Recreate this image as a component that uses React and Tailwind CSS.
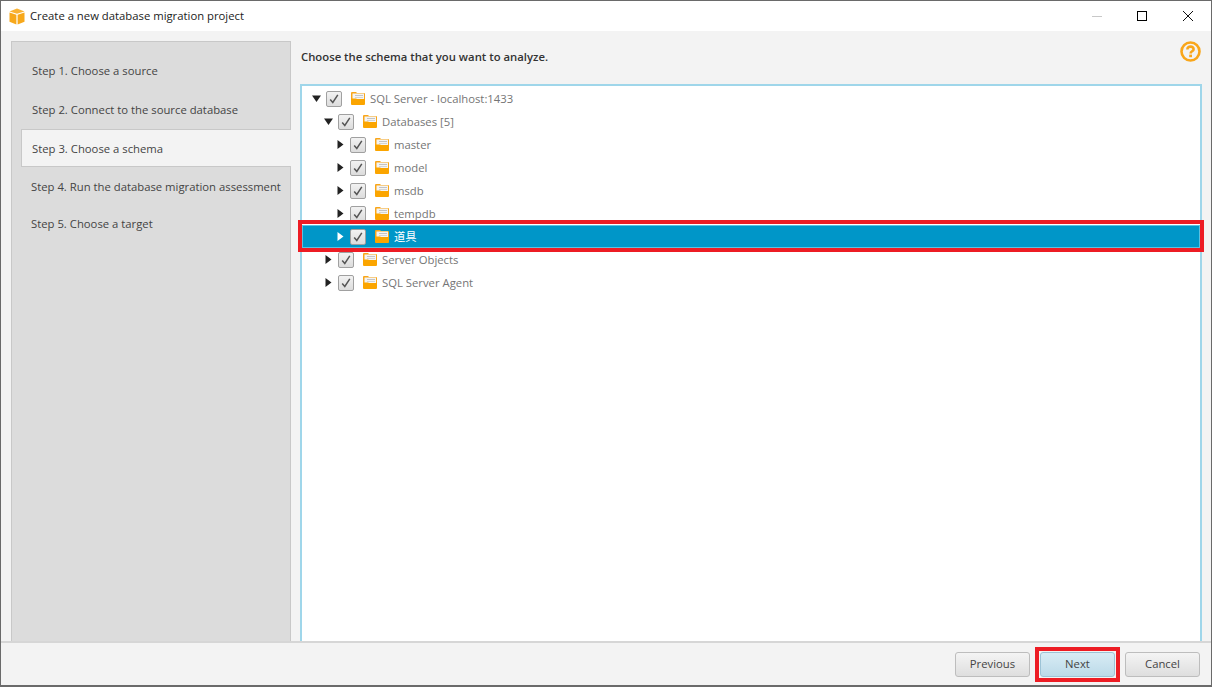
const FONT = "font-['Open_Sans','Noto_Sans_CJK_JP',sans-serif]";
const TEXT = "text-[11.3px]";

function BoxLogo() {
  return (
    <svg viewBox="0 0 16 17" className="w-4 h-[17px]">
      <path d="M8 0.5 L15.5 3.4 L8 5.8 L0.5 3.4 Z" fill="#f9b233" />
      <path d="M0.5 4.4 L7.4 6.8 V16.5 L0.5 13.8 Z" fill="#f7a81b" />
      <path d="M8.6 6.8 L15.5 4.4 V13.8 L8.6 16.5 Z" fill="#f7a81b" />
    </svg>
  );
}

function HelpIcon() {
  return (
    <svg viewBox="0 0 21 21" className="w-[21px] h-[21px]">
      <circle cx="10.5" cy="10.5" r="9" fill="none" stroke="#f9a61a" strokeWidth="2.6" />
      <path d="M7.4 8.4 C7.4 6.6 8.8 5.6 10.5 5.6 C12.3 5.6 13.6 6.7 13.6 8.2 C13.6 10.3 10.6 10.3 10.6 12.4" fill="none" stroke="#f9a61a" strokeWidth="2.6" />
      <rect x="9.2" y="13.6" width="2.8" height="2.6" fill="#f9a61a" />
    </svg>
  );
}

function Folder() {
  return (
    <svg viewBox="0 0 14 13" className="w-3.5 h-[13px] shrink-0 block">
      <path d="M0 1 Q0 0 1 0 H5 L6 1 H13 Q14 1 14 2 V7 H0 Z" fill="#f9a61a" />
      <rect x="1.5" y="1.5" width="11.5" height="5.5" fill="#f4f4f4" />
      <rect x="4" y="3" width="8" height="1" fill="#c4c4c4" />
      <rect x="4" y="5" width="8" height="1" fill="#d4d4d4" />
      <path d="M0 6.5 H5 L6 7 H14 V12 Q14 13 13 13 H1 Q0 13 0 12 Z" fill="#fba500" />
    </svg>
  );
}

function Checkbox() {
  return (
    <span className="w-4 h-4 shrink-0 rounded-[2px] border border-[#a0a0a0] bg-gradient-to-b from-[#f2f2f2] to-[#dcdcdc] flex items-center justify-center">
      <svg viewBox="0 0 12 12" className="w-3 h-3">
        <path d="M2.2 6.4 L4.8 9.4 L9.8 1.8" fill="none" stroke="#555" strokeWidth="1.5" />
      </svg>
    </span>
  );
}

function Arrow({ open, light }) {
  const color = light ? "#ffffff" : "#222222";
  return (
    <span className="w-3.5 shrink-0 flex items-center">
      <svg viewBox="0 0 9 9" className="w-[9px] h-[9px]">
        {open ? <path d="M0 1.5 H9 L4.5 8 Z" fill={color} /> : <path d="M1.5 0 L7.5 4.5 L1.5 9 Z" fill={color} />}
      </svg>
    </span>
  );
}

function TreeRow({ indent, open, label }) {
  return (
    <div className={`h-[23px] flex items-center ${indent} ${TEXT} text-[#757575]`}>
      <Arrow open={open} />
      <Checkbox />
      <span className="ml-[9px]"><Folder /></span>
      <span className="ml-[5px] pt-px">{label}</span>
    </div>
  );
}

function Step({ height, pad, active, children }) {
  return (
    <div
      className={`${height} ${pad} flex items-center ${TEXT} whitespace-nowrap text-[#444] ${
        active ? "ml-[9px] -mr-px pl-[10px] pt-[2px] bg-[#f3f3f3] border-y border-l border-[#c8c8c8]" : ""
      }`}
    >
      {children}
    </div>
  );
}

export default function App() {
  return (
    <div className={`${FONT} w-[1212px] h-[687px] flex flex-col bg-[#f3f3f3] border border-[#6a6a6a] border-b-2 overflow-hidden`}>
      {/* title bar */}
      <div className="h-[30px] shrink-0 bg-white flex items-center pl-2">
        <BoxLogo />
        <span className={`ml-[5px] ${TEXT} text-[#222]`}>Create a new database migration project</span>
        <div className="ml-auto flex items-center">
          <span className="w-2.5 h-px bg-[#c8c8c8] mr-[35px]" />
          <span className="w-2.5 h-2.5 border border-black mr-9" />
          <svg viewBox="0 0 10 10" className="w-2.5 h-2.5 mr-[18px]">
            <path d="M0 0 L10 10 M10 0 L0 10" stroke="#111" strokeWidth="1" />
          </svg>
        </div>
      </div>

      {/* body */}
      <div className="flex-1 min-h-0 flex pt-2.5 pl-2.5 border-b-2 border-[#d6d6d6]">
        <aside className="w-[280px] shrink-0 bg-[#dcdcdc] border-x border-t border-[#c8c8c8] pt-2.5">
          <Step height="h-[38px]" pad="pl-5">Step 1. Choose a source</Step>
          <Step height="h-[39px]" pad="pl-5 pt-px">Step 2. Connect to the source database</Step>
          <Step height="h-[38px]" active>Step 3. Choose a schema</Step>
          <Step height="h-[39px]" pad="pl-[19px] pt-px">Step 4. Run the database migration assessment</Step>
          <Step height="h-[36px]" pad="pl-[19px]">Step 5. Choose a target</Step>
        </aside>

        <main className="flex-1 min-w-0 flex flex-col px-[9px]">
          <div className="h-[43px] shrink-0 flex items-start justify-between">
            <h1 className={`${TEXT} font-semibold text-[#333] pt-[8px] pl-px`}>Choose the schema that you want to analyze.</h1>
            <span className="mr-px"><HelpIcon /></span>
          </div>
          <div className="flex-1 min-h-0 bg-white border-2 border-b-0 border-[#9fd6ea] pt-[1px]">
            <TreeRow indent="pl-[10px]" open label="SQL Server - localhost:1433" />
            <TreeRow indent="pl-[22px]" open label="Databases [5]" />
            <TreeRow indent="pl-[34px]" label="master" />
            <TreeRow indent="pl-[34px]" label="model" />
            <TreeRow indent="pl-[34px]" label="msdb" />
            <TreeRow indent="pl-[34px]" label="tempdb" />
            <div className={`relative h-[23px] flex items-center pl-[33px] ${TEXT} text-white bg-[#0096c8] border border-[#5cc0e0]`}>
              <Arrow light />
              <Checkbox />
              <span className="ml-[9px]"><Folder /></span>
              <span className="ml-[5px] pt-px">道具</span>
              <span className="absolute -left-[5px] -right-[5px] -top-[6px] -bottom-[5px] border-[4px] border-[#ed1c24]" />
            </div>
            <TreeRow indent="pl-[22px]" label="Server Objects" />
            <TreeRow indent="pl-[22px]" label="SQL Server Agent" />
          </div>
        </main>
      </div>

      {/* footer */}
      <footer className="h-[42px] shrink-0 flex items-center justify-end gap-2.5 pr-[11px] pt-[1px]">
        <button className={`w-[75px] h-[25px] ${TEXT} text-[#444] rounded-[3px] border border-[#bdbdbd] bg-gradient-to-b from-[#f4f4f4] to-[#dedede]`}>Previous</button>
        <div className="relative">
          <button className={`block w-[75px] h-[25px] ${TEXT} text-[#444] rounded-[3px] border border-[#9dc3d6] bg-gradient-to-b from-[#d8ecf5] to-[#bcdae8]`}>Next</button>
          <span className="absolute -inset-[5px] border-[4px] border-[#ed1c24]" />
        </div>
        <button className={`w-[75px] h-[25px] ${TEXT} text-[#444] rounded-[3px] border border-[#bdbdbd] bg-gradient-to-b from-[#f4f4f4] to-[#dedede]`}>Cancel</button>
      </footer>
    </div>
  );
}
